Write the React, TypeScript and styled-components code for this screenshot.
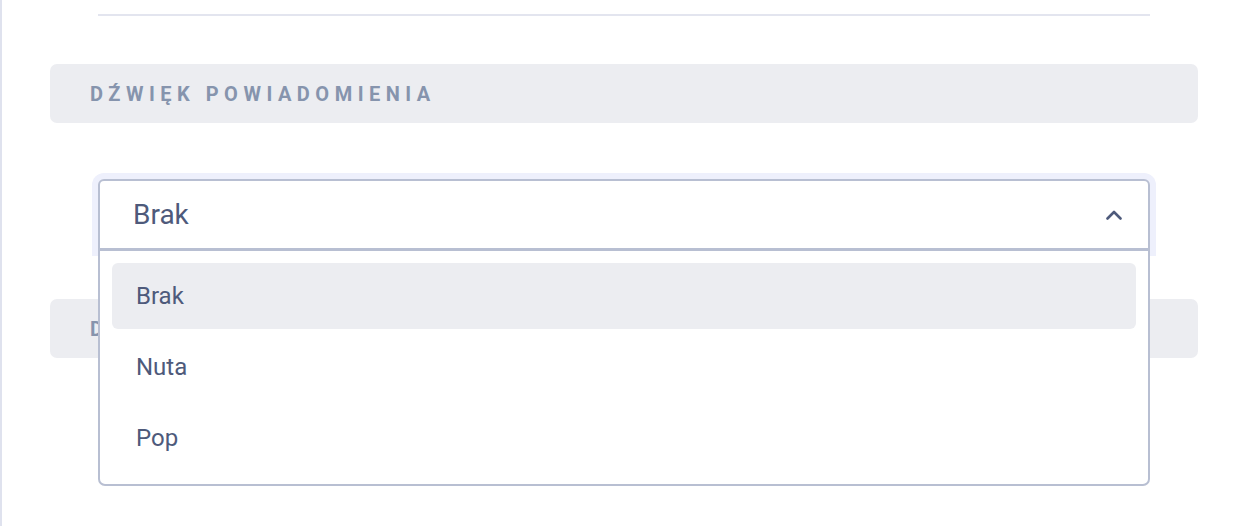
import styled, { createGlobalStyle } from 'styled-components'

const GlobalStyle = createGlobalStyle`
    html, body {
        margin: 0;
        padding: 0;
        background: #ffffff;
        font-family: Roboto, "Noto Sans", sans-serif;
    }
`

const Page = styled.div`
    min-height: 526px;
    box-sizing: border-box;
    border-left: 2px solid #dfe2ee;
    padding: 14px 46px 0 48px;
`

const Divider = styled.div`
    margin: 0 48px;
    height: 2px;
    background: #e3e5ef;
`

const SectionHeader = styled.div<{ $top: number }>`
    margin-top: ${p => p.$top}px;
    height: 59px;
    border-radius: 7px;
    background: #ecedf1;
    display: flex;
    align-items: center;
    padding-left: 40px;
    font-size: 20px;
    font-weight: 700;
    letter-spacing: 5.5px;
    color: #8694ad;
    text-transform: uppercase;
`

const SelectField = styled.div`
    position: relative;
    margin: 56px 48px 0;
    z-index: 2;
`

const Control = styled.div`
    height: 71px;
    box-sizing: border-box;
    border: 2px solid #b8bfd2;
    border-radius: 6px 6px 0 0;
    box-shadow: 0 0 0 6px #eef0fc;
    background: #ffffff;
    display: flex;
    align-items: center;
    justify-content: space-between;
    padding: 0 26px 0 33px;
    font-size: 28px;
    color: #4e5a7b;
`

const Chevron = () => (
    <svg width="16" height="10" viewBox="0 0 16 10">
        <polyline
            points="1.5,8.5 8,2 14.5,8.5"
            fill="none"
            stroke="#4e5a7b"
            strokeWidth="2.6"
            strokeLinecap="round"
            strokeLinejoin="round"
        />
    </svg>
)

const Menu = styled.div`
    position: absolute;
    top: 70px;
    left: 0;
    right: 0;
    box-sizing: border-box;
    border: 2px solid #b8bfd2;
    border-radius: 0 0 7px 7px;
    background: #ffffff;
    padding: 12px 12px 13px;
    display: flex;
    flex-direction: column;
    gap: 5px;
`

const Option = styled.div<{ $active?: boolean }>`
    height: 66px;
    border-radius: 6px;
    background: ${p => (p.$active ? '#ecedf1' : 'transparent')};
    display: flex;
    align-items: center;
    padding-left: 24px;
    font-size: 24px;
    color: #4e5a7b;
`

const options = ['Brak', 'Nuta', 'Pop']

const App = () => {
    return (
        <>
            <GlobalStyle />
            <Page>
                <Divider />
                <SectionHeader $top={48}>Dźwięk powiadomienia</SectionHeader>
                <SelectField>
                    <Control>
                        <span>Brak</span>
                        <Chevron />
                    </Control>
                    <Menu>
                        {options.map(o => (
                            <Option key={o} $active={o === 'Brak'}>
                                {o}
                            </Option>
                        ))}
                    </Menu>
                </SelectField>
                <SectionHeader $top={49}>Dźwięk wiadomości</SectionHeader>
            </Page>
        </>
    )
}

export default App
